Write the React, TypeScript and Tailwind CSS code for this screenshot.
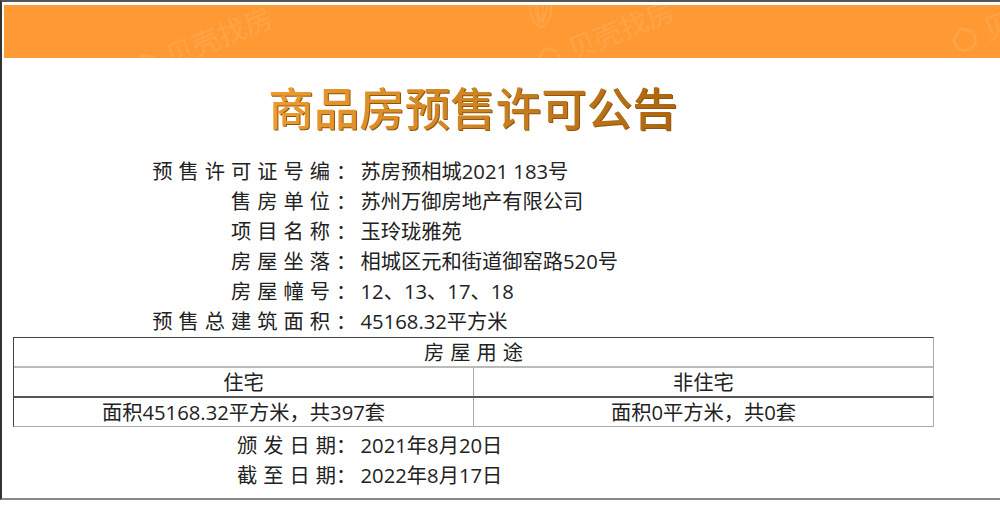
const rows = [
  ["预售许可证号编", "苏房预相城2021 183号"],
  ["售房单位", "苏州万御房地产有限公司"],
  ["项目名称", "玉玲珑雅苑"],
  ["房屋坐落", "相城区元和街道御窑路520号"],
  ["房屋幢号", "12、13、17、18"],
  ["预售总建筑面积", "45168.32平方米"],
];

const dates = [
  ["颁发日期", "2021年8月20日"],
  ["截至日期", "2022年8月17日"],
];

function InfoRow({ label, value, tight }: { label: string; value: string; tight?: boolean }) {
  return (
    <div className="flex h-[30px] items-center whitespace-nowrap">
      <div className="flex w-[352px] justify-end">
        {tight ? (
          <span>
            <span className="tracking-[6px]">{label.slice(0, -1)}</span>
            {label.slice(-1)}
          </span>
        ) : (
          <span className="tracking-[6px]">{label}</span>
        )}
        <span className="w-[20px]">：</span>
      </div>
      <div className="ml-[4.5px]">{value}</div>
    </div>
  );
}

function Watermark({ className, text = "贝壳找房" }: { className: string; text?: string }) {
  return (
    <div className={`absolute flex items-center gap-2 -rotate-[22deg] text-[28px] text-white/10 whitespace-nowrap ${className}`}>
      <svg width="28" height="28" viewBox="0 0 34 34" fill="none" stroke="currentColor" strokeWidth="3.5" strokeLinecap="round">
        <path d="M29 12 17 4 4 14c-1 10 4 17 13 17s14-6 13-14" />
      </svg>
      <span>{text}</span>
    </div>
  );
}

export default function App() {
  return (
    <div className="h-[513px] w-[1000px] overflow-hidden bg-white font-['Open_Sans','Noto_Sans_CJK_SC',sans-serif] text-[20.25px] leading-[30px] text-[#222]">
      <div className="h-[500px] border-t-2 border-b-2 border-l-2 border-t-[#555] border-b-[#888] border-l-[#333] pt-[3px] pl-[2px]">
        <div className="relative h-[53px] overflow-hidden bg-[#ff9933]">
          <Watermark className="left-[124px] top-[23px]" />
          <Watermark className="left-[526px] top-[16px]" />
          <Watermark className="left-[945px] top-[12px]" text="贝" />
          {/* logo at the top edge, mostly cut off */}
          <svg className="absolute top-[-8px] left-[524px] text-white/10" width="26" height="32" viewBox="0 0 26 32" fill="none" stroke="currentColor" strokeWidth="2">
            <path d="M3 4c-3 12 3 24 10 26 7-2 12-14 10-26" />
            <path d="M9 6l3 20M15 6l-1 20M6 8l5 17M20 8l-5 17" />
          </svg>
        </div>

        <div className="flex h-[98px] justify-center pr-[60px] pt-[18px]">
          <div className="bg-gradient-to-r from-[#ee9c2c] via-[#cf8422] to-[#ab660f] bg-clip-text pl-[2px] text-[45.5px] leading-[64px] font-medium text-transparent [filter:drop-shadow(1px_1px_0_#8f5510)]">
            商品房预售许可公告
          </div>
        </div>

        {rows.map(([label, value]) => (
          <InfoRow key={label} label={label} value={value} />
        ))}

        <div className="mt-[1px] ml-[9px] h-[90px] w-[921px] border-t border-r border-b border-l border-t-[#444] border-r-[#aaa] border-b-[#aaa] border-l-[#444]">
          <div className="flex h-[30px] items-center justify-center border-b-2 border-b-[#bbb] pl-[6px] tracking-[6px]">
            房屋用途
          </div>
          <div className="flex h-[30px] border-b-2 border-b-[#555]">
            <div className="flex w-[460px] items-center justify-center border-r border-r-[#aaa]">住宅</div>
            <div className="flex flex-1 items-center justify-center">非住宅</div>
          </div>
          <div className="flex h-[28px]">
            <div className="flex w-[460px] items-center justify-center border-r border-r-[#aaa]">面积45168.32平方米，共397套</div>
            <div className="flex flex-1 items-center justify-center">面积0平方米，共0套</div>
          </div>
        </div>

        <div className="pt-[3px]">
          {dates.map(([label, value]) => (
            <InfoRow key={label} label={label} value={value} tight />
          ))}
        </div>
      </div>
    </div>
  );
}
